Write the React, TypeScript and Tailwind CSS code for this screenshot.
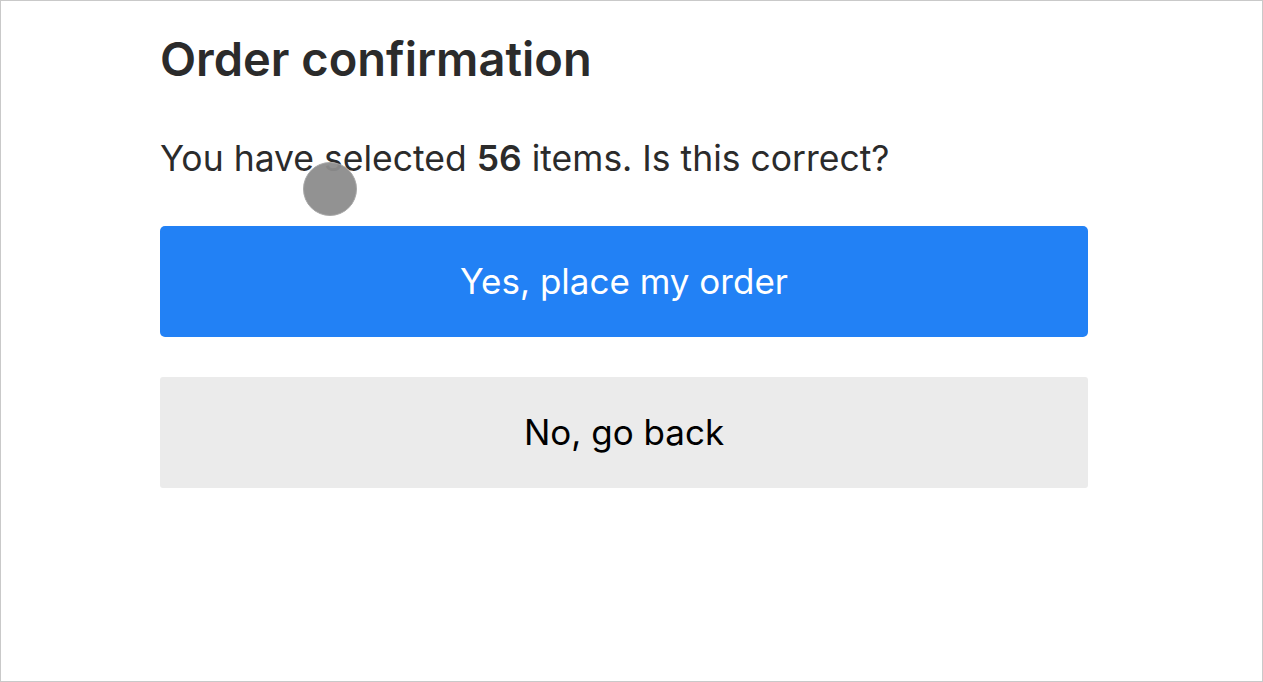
import React from 'react';

export default function App() {
  return (
    <div className="relative h-[682px] w-full overflow-hidden border border-[#c9c9c9] bg-white font-['Inter',sans-serif]">
      <div className="ml-[159px] w-[928px] pt-[26px]">
        <h1 className="text-[47px] font-semibold leading-[64px] text-[#2b2b2b]">Order confirmation</h1>
        <p className="mt-[48px] text-[35.5px] leading-[40px] text-[#2b2b2b]">
          You have selected <strong className="font-semibold">56</strong> items. Is this correct?
        </p>
        <div className="mt-[47px] flex flex-col gap-[40px]">
          <button className="flex h-[111px] w-full items-center justify-center rounded-[5px] bg-[#2281f5] text-[35px] text-white">
            Yes, place my order
          </button>
          <button className="flex h-[111px] w-full items-center justify-center rounded-[3px] bg-[#ebebeb] text-[35px] text-black">
            No, go back
          </button>
        </div>
      </div>
      {/* cursor marker */}
      <div className="absolute left-[302px] top-[161px] h-[54px] w-[54px] rounded-full border border-[#a8a8a8] bg-[#8c8c8c]/95" />
    </div>
  );
}
